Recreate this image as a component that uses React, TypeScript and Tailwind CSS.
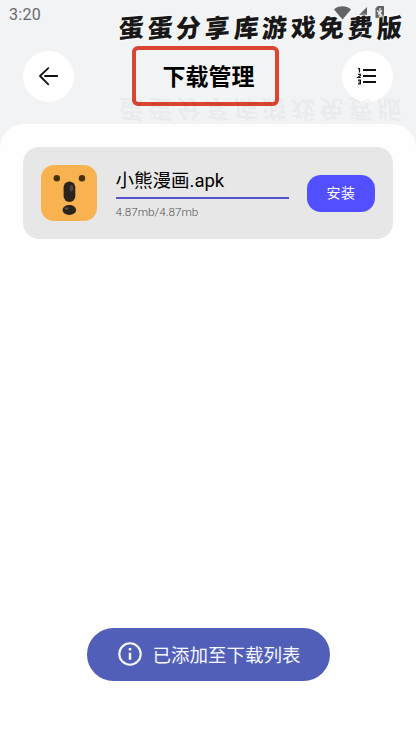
function BackIcon() {
  return (
    <svg className="size-[51px]" viewBox="0 0 51 51" fill="none" stroke="#111" strokeWidth="1.8" strokeLinecap="round" strokeLinejoin="round">
      <path d="M25.3 17.2 17 25l8.3 8.3M22 25h12.2" />
    </svg>
  );
}

function NumberedListIcon() {
  return (
    <svg className="size-[51px]" viewBox="0 0 51 51" fill="none" stroke="#111">
      <path strokeWidth="2" d="M21 19h13M21 25h13M21 31h13" />
      <path strokeWidth="1.2" d="M16 17.6h1.5v3.8M16 23.4h2.3v1.3L16 26.5h2.8M16 29.1h2.4v3.8H16M16.4 31h2" />
    </svg>
  );
}

function StatusIcons() {
  return (
    <svg className="h-5 w-14" viewBox="0 0 56 20" fill="#636467">
      <path d="M0 9.4C4.5 5.3 12.3 5.3 17 9.4L8.5 19.5Z" />
      <path d="M33 7v8h-8Z" />
      <path d="M41.5 8.5 43.7 6h6.3v12h-8.5Z" />
      <path fill="none" stroke="#f2f3f5" strokeWidth="1.2" d="m43 10.5 5 5M46 8v9M48 10.5l-4 4" />
    </svg>
  );
}

function BearIcon() {
  return (
    <svg className="size-14" viewBox="0 0 56 56">
      <rect width="56" height="56" rx="13" fill="#f9b250" />
      <g fill="#49300d">
        <circle cx="15.8" cy="13.3" r="3.2" />
        <circle cx="41" cy="13.3" r="3.2" />
      </g>
      <rect x="22.6" y="16.5" width="11.7" height="20.5" rx="5.8" fill="#2b241d" />
      <ellipse cx="28.3" cy="45" rx="6.8" ry="5" fill="#2b241d" />
      <ellipse cx="30.5" cy="23.2" rx="1.8" ry="3.3" fill="#4b4640" />
      <ellipse cx="25.5" cy="43.5" rx="2" ry="1.3" fill="#57514b" />
    </svg>
  );
}

function InfoIcon() {
  return (
    <svg className="size-6" viewBox="0 0 24 24" fill="none" stroke="#f7f9ff" strokeWidth="2.1">
      <circle cx="12" cy="12" r="10.7" />
      <path strokeWidth="2.5" d="M12 10.8v7M12 6v2.6" />
    </svg>
  );
}

function Banner() {
  return (
    <div className="flex text-[25px] font-black leading-8">
      {Array.from("蛋蛋分享库游戏免费版").map((char, index) => (
        <span key={index} className="w-[28.65px] -skew-x-2 -skew-y-5">{char}</span>
      ))}
    </div>
  );
}

export default function App() {
  return (
    <div className="relative flex h-[740px] w-[416px] flex-col overflow-hidden bg-[#f2f3f5] font-['Noto_Sans_CJK_SC',sans-serif] text-black">
      <div className="flex h-[46px] shrink-0 items-start justify-between pl-[9px] pr-[26px]">
        <span className="mt-[5px] font-[Roboto,sans-serif] text-[16px] leading-5 tracking-[0.3px] text-[#68696c]">3:20</span>
        <StatusIcons />
      </div>
      <header className="flex h-[60px] shrink-0 items-center px-[23px]">
        <button className="size-[51px] rounded-full bg-white"><BackIcon /></button>
        <h1 className="ml-[58px] flex h-[60px] w-[147px] items-center justify-center rounded-[6px] border-4 border-[#da4430] pb-[2px] pl-[6px] text-[23px] font-bold leading-8">下载管理</h1>
        <button className="ml-auto size-[51px] rounded-full bg-white"><NumberedListIcon /></button>
      </header>
      <main className="mt-[18px] flex flex-1 flex-col items-center rounded-t-[24px] bg-[#fefefe] pt-[23px]">
        <section className="flex h-[92px] w-[370px] items-center rounded-[16px] bg-[#e7e7e7] pl-[18px] pr-[18px]">
          <BearIcon />
          <div className="ml-[18.5px] w-[173px]">
            <h2 className="h-[29px] whitespace-nowrap pt-px font-[Roboto,'Noto_Sans_CJK_SC',sans-serif] text-[18.5px] leading-[29px]">小熊漫画.apk</h2>
            <div className="mt-[2px] h-[2px] bg-[#5352cf]" />
            <p className="mt-[5px] whitespace-nowrap font-[Roboto,sans-serif] text-[11.7px] font-light leading-4 text-[#505050]">4.87mb/4.87mb</p>
          </div>
          <button className="ml-auto h-[37px] w-[68px] rounded-[14px] bg-[#514fff] pb-[2px] text-[14px] leading-5 tracking-[0.5px] text-white">安装</button>
        </section>
        <div className="mb-[59px] mt-auto flex h-[53px] w-[243px] items-center rounded-full bg-[#515fb9] pb-px pl-[31px] text-[18.5px] leading-7 text-[#f7f9ff]">
          <InfoIcon />
          <span className="ml-[11px] whitespace-nowrap">已添加至下载列表</span>
        </div>
      </main>
      <div className="absolute left-[119px] top-[10px] text-[#181818] [text-shadow:0_0_2px_white,0_0_2px_white,0_0_3px_white]"><Banner /></div>
      <div aria-hidden="true" className="absolute left-[119px] top-[95px] -scale-y-100 text-black/[0.03]"><Banner /></div>
    </div>
  );
}
